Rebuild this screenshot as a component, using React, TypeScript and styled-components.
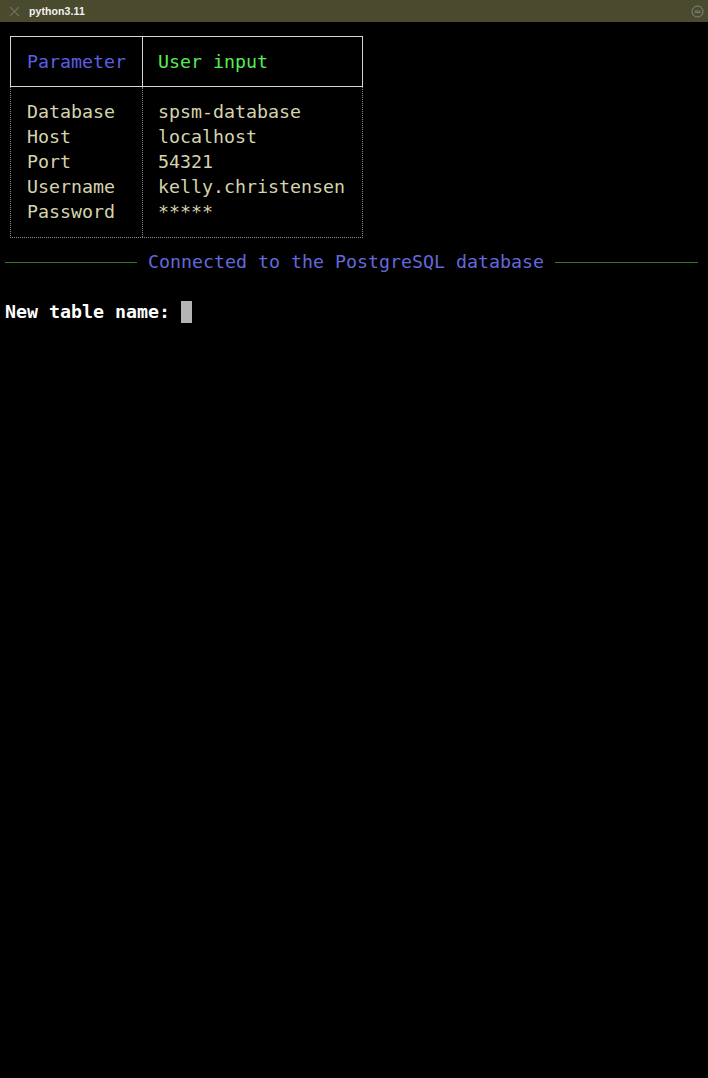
import styled, { createGlobalStyle } from 'styled-components';

const GlobalStyle = createGlobalStyle`
  html, body {
    margin: 0;
    padding: 0;
    background: #000;
  }
  #root {
    min-height: 100vh;
    background: #000;
  }
`;

const MONO = `"DejaVu Sans Mono", "Liberation Mono", monospace`;

const Window = styled.div`
  width: 708px;
  height: 1078px;
  background: #000;
  display: flex;
  flex-direction: column;
  overflow: hidden;
`;

const TitleBar = styled.div`
  height: 22px;
  flex-shrink: 0;
  display: flex;
  align-items: center;
  padding: 0 4px 0 9px;
  background: #4a4a2e;
  box-sizing: border-box;
`;

const CloseIcon = styled.svg`
  width: 11px;
  height: 11px;
  flex-shrink: 0;
`;

const Title = styled.span`
  margin-left: 9px;
  font-family: "Liberation Sans", Arial, sans-serif;
  font-size: 10.5px;
  font-weight: 700;
  color: #f2f2f2;
  letter-spacing: 0.1px;
  flex: 1;
`;

const MenuIcon = styled.svg`
  width: 13px;
  height: 13px;
  flex-shrink: 0;
`;

const Terminal = styled.div`
  padding: 14px 0 0 5px;
  width: 693px;
  font-family: ${MONO};
  font-size: 18.3px;
  line-height: 25px;
  color: #d5d3ae;
`;

const Table = styled.div`
  margin-left: 5px;
  width: 353px;
  display: flex;
  flex-direction: column;
`;

const HeaderRow = styled.div`
  display: flex;
  border: 1px solid #d6d6d6;
`;

const BodyRow = styled.div`
  display: flex;
  border: 1px dotted #8a8a8a;
  border-top: none;
`;

const Cell = styled.div<{ $first?: boolean; $dim?: boolean; $pad: string }>`
  box-sizing: border-box;
  width: ${({ $first }) => ($first ? '132px' : '219px')};
  padding: ${({ $pad }) => $pad};
  padding-left: ${({ $first }) => ($first ? '16px' : '15px')};
  border-right: ${({ $first, $dim }) =>
    $first ? ($dim ? '1px dotted #8a8a8a' : '1px solid #d6d6d6') : 'none'};
  white-space: pre;
`;

const HeadText = styled.span<{ $color: string }>`
  color: ${({ $color }) => $color};
`;

const Line = styled.div`
  height: 25px;
  white-space: pre;
`;

const Rule = styled.div`
  margin-top: 11px;
  display: flex;
  align-items: flex-start;
  height: 25px;
`;

const RuleLine = styled.div<{ $width: number }>`
  width: ${({ $width }) => $width}px;
  height: 1px;
  background: #347a22;
  margin-top: 13px;
`;

const RuleText = styled.span`
  color: #6468dc;
  margin: 0 11px;
  white-space: pre;
`;

const Prompt = styled.div`
  margin-top: 25px;
  display: flex;
  align-items: center;
  height: 25px;
  white-space: pre;
  color: #ffffff;
  font-weight: 700;
`;

const Cursor = styled.span`
  display: inline-block;
  width: 11px;
  height: 22px;
  background: #b4b4b4;
`;

const params = [
  ['Database', 'spsm-database'],
  ['Host', 'localhost'],
  ['Port', '54321'],
  ['Username', 'kelly.christensen'],
  ['Password', '*****'],
];

export default function App() {
  return (
    <>
      <GlobalStyle />
      <Window>
        <TitleBar>
          <CloseIcon viewBox="0 0 11 11">
            <path d="M1 1 L10 10 M10 1 L1 10" stroke="#6e6e62" strokeWidth="1.1" fill="none" />
          </CloseIcon>
          <Title>python3.11</Title>
          <MenuIcon viewBox="0 0 13 13">
            <circle cx="6.5" cy="6.5" r="5.5" stroke="#8a8a86" strokeWidth="1" fill="none" />
            <path d="M3.5 6 H9.5 M3.5 7.5 H9.5" stroke="#8a8a86" strokeWidth="0.8" />
          </MenuIcon>
        </TitleBar>
        <Terminal>
          <Table>
            <HeaderRow>
              <Cell $first $pad="12px 0">
                <HeadText $color="#5c5fe0">Parameter</HeadText>
              </Cell>
              <Cell $pad="12px 0">
                <HeadText $color="#55ee55">User input</HeadText>
              </Cell>
            </HeaderRow>
            <BodyRow>
              <Cell $first $dim $pad="12px 0 13px">
                {params.map(([k]) => (
                  <Line key={k}>{k}</Line>
                ))}
              </Cell>
              <Cell $pad="12px 0 13px">
                {params.map(([k, v]) => (
                  <Line key={k}>{v}</Line>
                ))}
              </Cell>
            </BodyRow>
          </Table>
          <Rule>
            <RuleLine $width={132} />
            <RuleText>Connected to the PostgreSQL database</RuleText>
            <RuleLine $width={143} />
          </Rule>
          <Prompt>
            New table name: <Cursor />
          </Prompt>
        </Terminal>
      </Window>
    </>
  );
}
